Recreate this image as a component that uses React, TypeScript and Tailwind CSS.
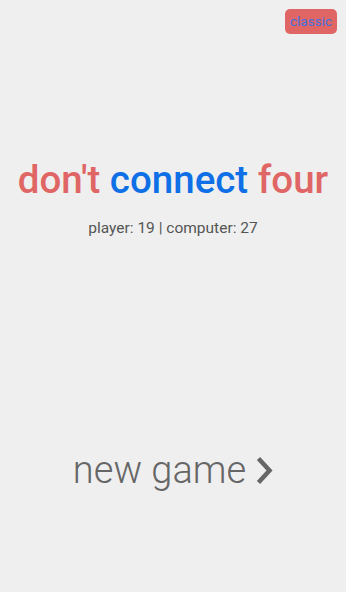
export default function App() {
  return (
    <div className="relative flex h-[592px] w-[346px] flex-col items-center bg-[#efefef]" style={{ fontFamily: "Roboto, sans-serif" }}>
      <button className="absolute right-[9px] top-[9px] h-[25px] rounded-[5px] bg-[#e06666] px-[5px] text-[13.5px] leading-[25px] text-[#4470dc]">
        classic
      </button>
      <div className="mt-[157px] text-[38.5px] font-medium leading-[46px] whitespace-nowrap">
        <span className="text-[#e06666]">don't </span>
        <span className="text-[#0f6fe6]">connect</span>
        <span className="text-[#e06666]"> four</span>
      </div>
      <div className="mt-[15px] text-[15.5px] leading-[20px] text-[#555555]">player: 19 | computer: 27</div>
      <div className="mt-[209px] flex items-center gap-[10px] text-[38px] font-light leading-[46px] text-[#666666]">
        <span>new game</span>
        <svg width="17" height="29" viewBox="0 0 17 29" fill="none">
          <path d="M2.5 2.5 L13.5 14.5 L2.5 26.5" stroke="#666666" strokeWidth="4.5" />
        </svg>
      </div>
    </div>
  );
}
